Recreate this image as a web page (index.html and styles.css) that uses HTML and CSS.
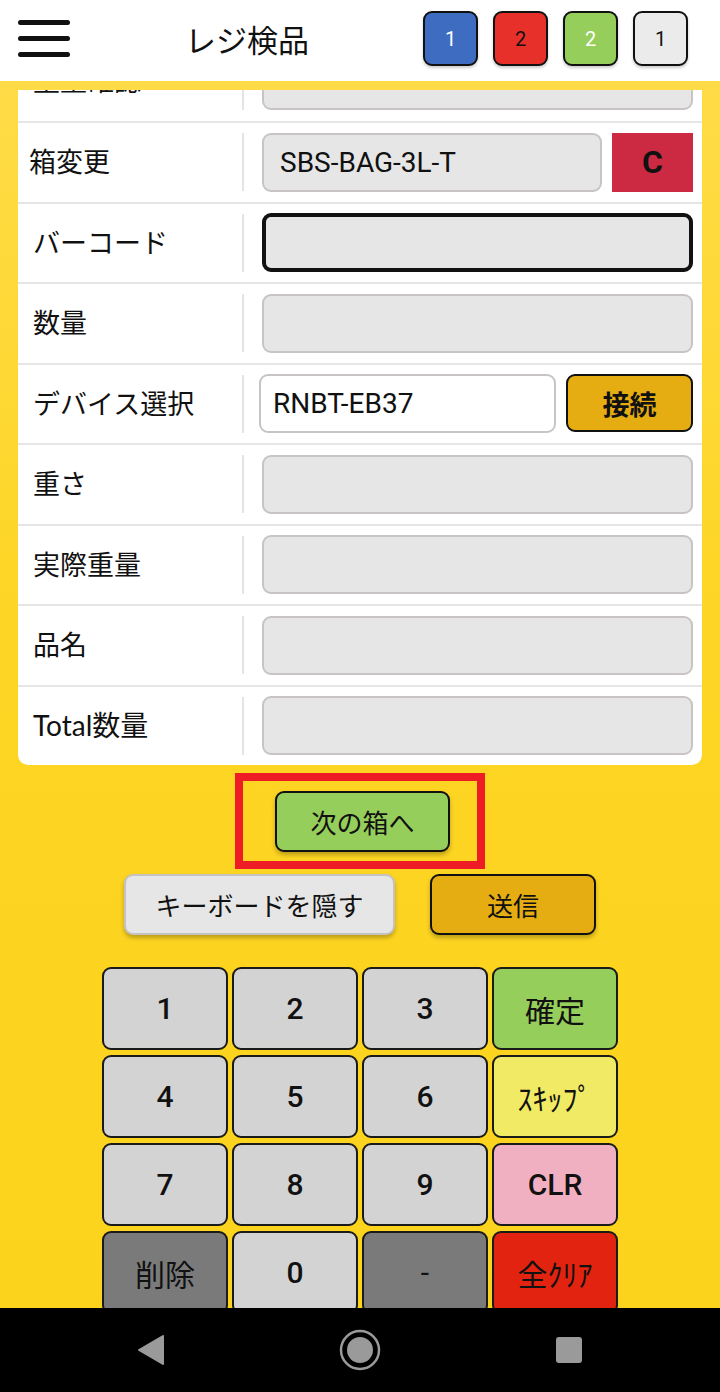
FILE: index.html
```html
<!DOCTYPE html>
<html lang="ja">
<head>
  <meta charset="UTF-8">
  <meta name="viewport" content="width=device-width, initial-scale=1.0">
  <title>レジ検品</title>
  <link rel="stylesheet" href="styles.css">
</head>
<body>
  <div class="app">
    <header class="topbar">
      <div class="menu"><span></span><span></span><span></span></div>
      <h1 class="title">レジ検品</h1>
      <div class="badges">
        <div class="badge badge-blue">1</div>
        <div class="badge badge-red">2</div>
        <div class="badge badge-green">2</div>
        <div class="badge badge-gray">1</div>
      </div>
    </header>

    <main class="content">
      <!-- form card (scrolled to the bottom) -->
      <section class="card">
        <div class="row">
          <div class="label">重量確認</div>
          <div class="field"><div class="input"></div></div>
        </div>
        <div class="row">
          <div class="label label-tight">箱変更</div>
          <div class="field">
            <div class="input">SBS-BAG-3L-T</div>
            <button class="clear-btn">C</button>
          </div>
        </div>
        <div class="row">
          <div class="label">バーコード</div>
          <div class="field"><div class="input input-focus"></div></div>
        </div>
        <div class="row">
          <div class="label">数量</div>
          <div class="field"><div class="input"></div></div>
        </div>
        <div class="row">
          <div class="label">デバイス選択</div>
          <div class="field field-device">
            <div class="input input-white">RNBT-EB37</div>
            <button class="connect-btn">接続</button>
          </div>
        </div>
        <div class="row">
          <div class="label">重さ</div>
          <div class="field"><div class="input"></div></div>
        </div>
        <div class="row">
          <div class="label">実際重量</div>
          <div class="field"><div class="input"></div></div>
        </div>
        <div class="row">
          <div class="label">品名</div>
          <div class="field"><div class="input"></div></div>
        </div>
        <div class="row">
          <div class="label label-total">Total数量</div>
          <div class="field"><div class="input"></div></div>
        </div>
      </section>

      <div class="next-frame">
        <button class="btn btn-green">次の箱へ</button>
      </div>
      <div class="action-row">
        <button class="btn btn-light btn-wide">キーボードを隠す</button>
        <button class="btn btn-amber btn-send">送信</button>
      </div>

      <div class="keypad">
        <button class="key">1</button>
        <button class="key">2</button>
        <button class="key">3</button>
        <button class="key key-green">確定</button>
        <button class="key">4</button>
        <button class="key">5</button>
        <button class="key">6</button>
        <button class="key key-yellow">ｽｷｯﾌﾟ</button>
        <button class="key">7</button>
        <button class="key">8</button>
        <button class="key">9</button>
        <button class="key key-pink">CLR</button>
        <button class="key key-dark">削除</button>
        <button class="key">0</button>
        <button class="key key-dark">-</button>
        <button class="key key-red">全ｸﾘｱ</button>
      </div>
    </main>

    <nav class="sysnav">
      <svg width="28" height="30" viewBox="0 0 28 30"><path d="M26 1 L26 29 L2 15 Z" fill="#9a9a9a" stroke="#9a9a9a" stroke-width="2" stroke-linejoin="round"/></svg>
      <svg width="42" height="42" viewBox="0 0 42 42"><circle cx="21" cy="21" r="19" fill="none" stroke="#9a9a9a" stroke-width="2.5"/><circle cx="21" cy="21" r="13" fill="#9a9a9a"/></svg>
      <svg width="28" height="28" viewBox="0 0 28 28"><rect x="1" y="1" width="26" height="26" rx="3" fill="#9a9a9a"/></svg>
    </nav>
  </div>
</body>
</html>
```

FILE: styles.css
```css
* {
  box-sizing: border-box;
}

body {
  margin: 0;
  font-family: Roboto, "Noto Sans CJK JP", sans-serif;
  color: #111;
}

.app {
  width: 720px;
  height: 1392px;
  display: flex;
  flex-direction: column;
  background: linear-gradient(180deg, #ffdd4c 0%, #fdd524 45%, #fcd31b 100%);
  overflow: hidden;
}

/* header */
.topbar {
  height: 81px;
  flex: 0 0 81px;
  background: #fff;
  display: flex;
  align-items: center;
  padding: 0 32px 0 18px;
}

.menu {
  width: 52px;
  display: flex;
  flex-direction: column;
  gap: 11px;
  margin-top: -4px;
}

.menu span {
  display: block;
  height: 5px;
  background: #111;
  border-radius: 3px;
}

.title {
  margin: -4px 0 0 115px;
  font-size: 31px;
  font-weight: 400;
  font-family: "Noto Sans CJK JP", sans-serif;
  flex: 1;
}

.badges {
  display: flex;
  gap: 15px;
  margin-top: -4px;
}

.badge {
  width: 55px;
  height: 55px;
  border: 2px solid #111;
  border-radius: 9px;
  display: flex;
  align-items: center;
  justify-content: center;
  font-size: 20px;
  box-shadow: 0 2px 3px rgba(0, 0, 0, 0.2);
}

.badge-blue { background: #3e6cc1; color: #fff; }
.badge-red { background: #e8302a; color: #111; }
.badge-green { background: #96ce5b; color: #fff; }
.badge-gray { background: #ebebeb; color: #111; }

/* main */
.content {
  flex: 1;
  overflow: hidden;
  padding-top: 9px;
  display: flex;
  flex-direction: column;
  align-items: center;
}

.content > * {
  flex-shrink: 0;
}

.card {
  width: 684px;
  height: 675px;
  background: #fff;
  border-radius: 0 0 10px 10px;
  display: flex;
  flex-direction: column;
  justify-content: flex-end;
  overflow: hidden;
}

.row {
  flex: 0 0 auto;
  display: flex;
  align-items: center;
  height: 80.5px;
  border-top: 2px solid #e6e6e6;
}

.row:first-child {
  border-top: none;
}

.label {
  width: 226px;
  height: 58px;
  padding-left: 15px;
  display: flex;
  align-items: center;
  font-size: 27px;
  font-family: "Noto Sans CJK JP", sans-serif;
  border-right: 2px solid #e4e4e4;
  padding-bottom: 3px;
}

.label-tight {
  padding-left: 11px;
}

.label-total {
  font-family: Lato, "Noto Sans CJK JP", sans-serif;
  font-weight: 400;
  font-size: 28px;
}

.field {
  flex: 1;
  display: flex;
  gap: 10px;
  padding: 0 9px 0 18px;
}

.field-device {
  padding-left: 15px;
}

.input {
  flex: 1;
  height: 59px;
  background: #e6e6e6;
  border: 2px solid #c8c4c4;
  border-radius: 9px;
  display: flex;
  align-items: center;
  padding-left: 16px;
  font-size: 28px;
}

.input-focus {
  border: 4px solid #111;
}

.input-white {
  background: #fff;
  padding-left: 12px;
}

.clear-btn {
  width: 81px;
  height: 59px;
  border: none;
  background: #cc2a42;
  color: #111;
  font-family: Roboto, sans-serif;
  font-weight: 700;
  font-size: 32px;
  padding: 0;
}

.connect-btn {
  width: 127px;
  height: 58px;
  background: #e6ad12;
  border: 2px solid #111;
  border-radius: 9px;
  font-family: "Noto Sans CJK JP", sans-serif;
  font-weight: 700;
  font-size: 27px;
  color: #111;
  padding: 0;
}

/* action buttons */
.next-frame {
  margin-top: 8px;
  width: 250px;
  height: 96px;
  border: 8px solid #ee1c25;
  display: flex;
  justify-content: center;
  padding-top: 10px;
  padding-left: 5px;
}

.btn {
  height: 61px;
  border-radius: 9px;
  font-family: "Noto Sans CJK JP", sans-serif;
  font-size: 26px;
  color: #111;
  box-shadow: 0 3px 4px rgba(0, 0, 0, 0.25);
  padding: 0;
}

.btn-green {
  width: 175px;
  background: #96ce5b;
  border: 2px solid #111;
}

.action-row {
  margin-top: 5px;
  display: flex;
  gap: 35px;
}

.btn-light {
  background: #e6e6e6;
  border: 2px solid #c4c2c2;
}

.btn-wide {
  width: 271px;
}

.btn-amber {
  background: #e6ad12;
  border: 2px solid #111;
}

.btn-send {
  width: 166px;
}

/* keypad */
.keypad {
  margin-top: 32px;
  display: grid;
  grid-template-columns: repeat(4, 126px);
  grid-auto-rows: 83px;
  gap: 5px 4px;
}

.key {
  background: #d3d3d3;
  border: 2px solid #1a1a1a;
  border-radius: 9px;
  font-family: Roboto, "Noto Sans CJK JP", sans-serif;
  font-size: 30px;
  font-weight: 500;
  color: #111;
  padding: 0;
}

.key-green { background: #96ce5b; font-weight: 400; }
.key-yellow { background: #f0ea64; font-weight: 400; }
.key-pink { background: #f1b0c2; }
.key-dark { background: #7a7a7a; font-weight: 400; }
.key-red { background: #e2230f; font-weight: 400; }

/* android navigation bar */
.sysnav {
  height: 84px;
  flex: 0 0 84px;
  background: #000;
  display: flex;
  align-items: center;
  justify-content: space-between;
  padding: 0 137px 0 137px;
}
```
